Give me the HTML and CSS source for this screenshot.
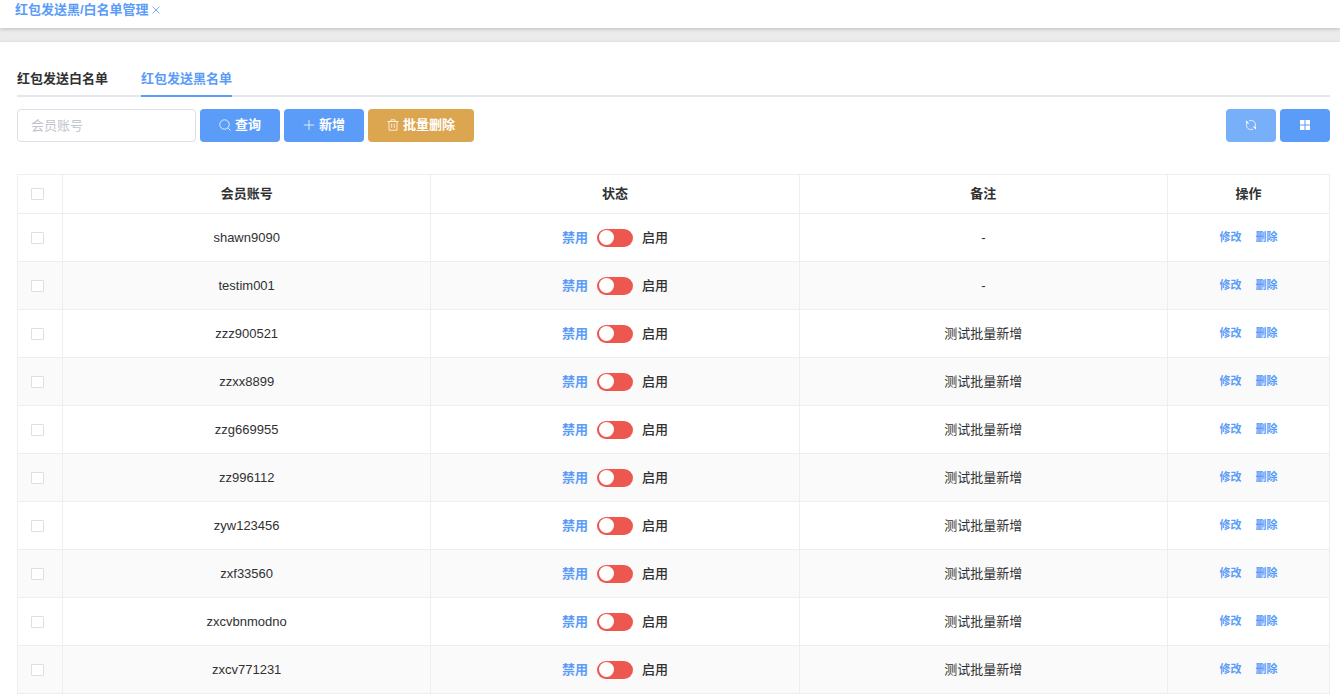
FILE: index.html
```html
<!DOCTYPE html>
<html lang="zh-CN">
<head>
  <meta charset="UTF-8" />
  <meta name="viewport" content="width=device-width, initial-scale=1.0"/>
  <title>红包发送黑/白名单管理</title>
  <link rel="stylesheet" href="styles.css">
</head>
<body>
  <nav class="page-tabs">
    <a class="page-tab" href="#">红包发送黑/白名单管理</a>
    <button class="page-tab-close" type="button" aria-label="关闭">
      <svg viewBox="0 0 8 8" width="8" height="8"><path d="M.5 .5l7 7M7.5 .5l-7 7"/></svg>
    </button>
  </nav>

  <main class="container">
    <div class="tabs">
      <a class="tab" href="#white">红包发送白名单</a>
      <a class="tab active" href="#black">红包发送黑名单</a>
    </div>

    <form class="toolbar">
      <input class="search" type="text" placeholder="会员账号" aria-label="会员账号" />
      <button class="btn" type="button">
        <svg viewBox="0 0 12 12" width="12" height="12"><circle cx="5.5" cy="5.5" r="4.7"/><path d="M9 9l2.5 2.5"/></svg>
        查询
      </button>
      <button class="btn" type="button">
        <svg viewBox="0 0 12 12" width="12" height="12"><path d="M6 .8v10.4M.8 6h10.4"/></svg>
        新增
      </button>
      <button class="btn warning" type="button">
        <svg viewBox="0 0 12 12" width="12" height="12"><path d="M.5 2.5h11M4 2.5V.8h4v1.7M2 2.5v8.7h8V2.5M4.7 4.7v4.2M7.3 4.7v4.2"/></svg>
        批量删除
      </button>
      <div class="tools">
        <button class="btn icon-btn light" type="button" aria-label="刷新">
          <svg viewBox="0 0 12 12" width="12" height="12"><path d="M4 1.8a4.6 4.6 0 0 1 6.5 5.1M8 10.2A4.6 4.6 0 0 1 1.5 5.1"/><path class="solid" d="M1 1.3v3.3h3.3zM11 10.7V7.4H7.700z"/></svg>
        </button>
        <button class="btn icon-btn" type="button" aria-label="列设置">
          <svg viewBox="0 0 12 12" width="12" height="12"><path class="solid" d="M1 1h4.500v4.500H1zM6.500 1H11v4.500H6.500zM1 6.500h4.500V11H1zM6.500 6.500H11V11H6.500z"/></svg>
        </button>
      </div>
    </form>

    <table class="list">
      <thead>
        <tr>
          <th class="col-check"><input class="check" type="checkbox" aria-label="全选" /></th>
          <th>会员账号</th>
          <th>状态</th>
          <th>备注</th>
          <th class="col-action">操作</th>
        </tr>
      </thead>
      <tbody>
        <tr>
          <td><input class="check" type="checkbox" aria-label="shawn9090" /></td>
          <td>shawn9090</td>
          <td><label class="status"><span class="off">禁用</span><input class="switch" type="checkbox" /><span>启用</span></label></td>
          <td>-</td>
          <td><div class="actions"><a href="#">修改</a><a href="#">删除</a></div></td>
        </tr>
        <tr>
          <td><input class="check" type="checkbox" aria-label="testim001" /></td>
          <td>testim001</td>
          <td><label class="status"><span class="off">禁用</span><input class="switch" type="checkbox" /><span>启用</span></label></td>
          <td>-</td>
          <td><div class="actions"><a href="#">修改</a><a href="#">删除</a></div></td>
        </tr>
        <tr>
          <td><input class="check" type="checkbox" aria-label="zzz900521" /></td>
          <td>zzz900521</td>
          <td><label class="status"><span class="off">禁用</span><input class="switch" type="checkbox" /><span>启用</span></label></td>
          <td>测试批量新增</td>
          <td><div class="actions"><a href="#">修改</a><a href="#">删除</a></div></td>
        </tr>
        <tr>
          <td><input class="check" type="checkbox" aria-label="zzxx8899" /></td>
          <td>zzxx8899</td>
          <td><label class="status"><span class="off">禁用</span><input class="switch" type="checkbox" /><span>启用</span></label></td>
          <td>测试批量新增</td>
          <td><div class="actions"><a href="#">修改</a><a href="#">删除</a></div></td>
        </tr>
        <tr>
          <td><input class="check" type="checkbox" aria-label="zzg669955" /></td>
          <td>zzg669955</td>
          <td><label class="status"><span class="off">禁用</span><input class="switch" type="checkbox" /><span>启用</span></label></td>
          <td>测试批量新增</td>
          <td><div class="actions"><a href="#">修改</a><a href="#">删除</a></div></td>
        </tr>
        <tr>
          <td><input class="check" type="checkbox" aria-label="zz996112" /></td>
          <td>zz996112</td>
          <td><label class="status"><span class="off">禁用</span><input class="switch" type="checkbox" /><span>启用</span></label></td>
          <td>测试批量新增</td>
          <td><div class="actions"><a href="#">修改</a><a href="#">删除</a></div></td>
        </tr>
        <tr>
          <td><input class="check" type="checkbox" aria-label="zyw123456" /></td>
          <td>zyw123456</td>
          <td><label class="status"><span class="off">禁用</span><input class="switch" type="checkbox" /><span>启用</span></label></td>
          <td>测试批量新增</td>
          <td><div class="actions"><a href="#">修改</a><a href="#">删除</a></div></td>
        </tr>
        <tr>
          <td><input class="check" type="checkbox" aria-label="zxf33560" /></td>
          <td>zxf33560</td>
          <td><label class="status"><span class="off">禁用</span><input class="switch" type="checkbox" /><span>启用</span></label></td>
          <td>测试批量新增</td>
          <td><div class="actions"><a href="#">修改</a><a href="#">删除</a></div></td>
        </tr>
        <tr>
          <td><input class="check" type="checkbox" aria-label="zxcvbnmodno" /></td>
          <td>zxcvbnmodno</td>
          <td><label class="status"><span class="off">禁用</span><input class="switch" type="checkbox" /><span>启用</span></label></td>
          <td>测试批量新增</td>
          <td><div class="actions"><a href="#">修改</a><a href="#">删除</a></div></td>
        </tr>
        <tr>
          <td><input class="check" type="checkbox" aria-label="zxcv771231" /></td>
          <td>zxcv771231</td>
          <td><label class="status"><span class="off">禁用</span><input class="switch" type="checkbox" /><span>启用</span></label></td>
          <td>测试批量新增</td>
          <td><div class="actions"><a href="#">修改</a><a href="#">删除</a></div></td>
        </tr>
      </tbody>
    </table>
  </main>
</body>
</html>
```
FILE: styles.css
```css
* {
  box-sizing: border-box;
}
body {
  margin: 0;
  font-family: "Liberation Sans", "Noto Sans CJK SC", sans-serif;
  font-size: 13px;
  line-height: 20px;
  color: #303133;
  background: #ebebeb;
}
a {
  color: #5a9cf8;
  text-decoration: none;
}
button, input {
  font: inherit;
  margin: 0;
}
svg {
  display: block;
  fill: none;
  stroke: currentColor;
  stroke-width: 0.8;
}
.solid {
  fill: currentColor;
  stroke: none;
}

/* opened pages */
.page-tabs {
  display: flex;
  align-items: center;
  gap: 1px;
  padding: 0 15px 8px;
  background: #fff;
  box-shadow: 0 1px 4px rgba(0, 0, 0, 0.2);
}
.page-tab {
  font-weight: 700;
}
.page-tab-close {
  padding: 2px;
  border: none;
  background: none;
  color: #5a9cf8;
  cursor: pointer;
}

.container {
  margin-top: 14px;
  padding: 23px 10px 6px 17px;
  background: #fff;
  box-shadow: 0 0 3px rgba(0, 0, 0, 0.1);
}
.tabs {
  display: flex;
  gap: 33px;
  border-bottom: 2px solid #e4e7ed;
}
.tab {
  margin-bottom: -2px;
  padding: 4px 0 6px;
  border-bottom: 2px solid transparent;
  color: #303133;
  font-weight: 700;
}
.tab.active {
  color: #5a9cf8;
  border-color: #5a9cf8;
}

.toolbar {
  display: flex;
  gap: 4px;
  margin: 12px 0 32px;
}
.search {
  width: 179px;
  height: 33px;
  padding: 0 13px;
  border: 1px solid #dcdfe6;
  border-radius: 4px;
  color: #606266;
}
.search::placeholder {
  color: #c0c4cc;
}
.btn {
  display: flex;
  align-items: center;
  justify-content: center;
  gap: 4px;
  height: 33px;
  padding: 0 19px 2px;
  border: none;
  border-radius: 4px;
  background: #5a9cf8;
  color: #fff;
  font-weight: 700;
  cursor: pointer;
}
.btn.warning {
  background: #dca550;
}
.btn.light {
  background: #78aff9;
}
.tools {
  display: flex;
  gap: 4px;
  margin-left: auto;
}

.list {
  width: 100%;
  table-layout: fixed;
  border-collapse: separate;
  border-spacing: 0;
  border-top: 1px solid #ebeef5;
  border-left: 1px solid #ebeef5;
  text-align: center;
}
.list th, .list td {
  height: 48px;
  padding: 0;
  border-right: 1px solid #ebeef5;
  border-bottom: 1px solid #ebeef5;
}
.list th {
  height: 39px;
  font-weight: 700;
}
.list tbody tr:nth-child(even) {
  background: #fafafa;
}
.list .col-check {
  width: 45px;
}
.list .col-action {
  width: 162px;
}
.check {
  display: block;
  width: 13px;
  height: 12px;
  margin-left: 13px;
  appearance: none;
  border: 1px solid #dcdfe6;
  border-radius: 1px;
  background: #fff;
}
.check:checked {
  background: #5a9cf8;
}
.status {
  display: inline-flex;
  align-items: center;
  gap: 9px;
  vertical-align: middle;
  font-weight: 500;
}
.status .off {
  color: #5a9cf8;
  font-weight: 700;
}
.switch {
  display: flex;
  width: 36px;
  height: 18px;
  padding: 0 2px;
  align-items: center;
  appearance: none;
  border-radius: 9px;
  background: #ec5750;
  cursor: pointer;
}
.switch::before {
  content: "";
  width: 15px;
  height: 15px;
  border-radius: 50%;
  background: #fff;
}
.switch:checked {
  justify-content: flex-end;
  background: #5a9cf8;
}
.actions {
  display: flex;
  justify-content: center;
  gap: 14px;
  padding-bottom: 2px;
  font-size: 11px;
  font-weight: 700;
}
```
